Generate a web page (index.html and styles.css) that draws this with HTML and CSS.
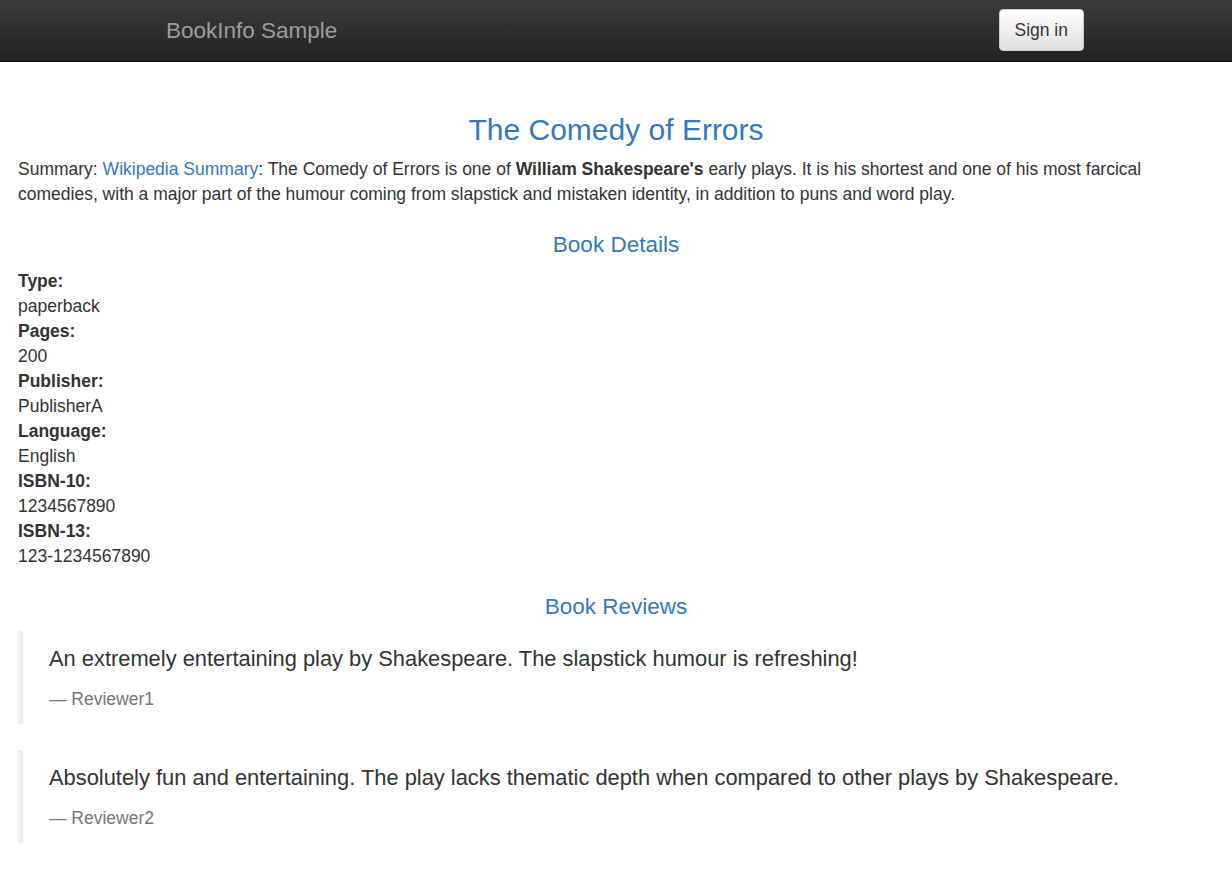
FILE: index.html
```html
<!DOCTYPE html>
<html>
<head>
<meta charset="utf-8">
<title>Simple Bookstore App</title>
<link rel="stylesheet" href="styles.css">
</head>
<body>
<nav class="navbar">
  <div class="navbar-inner">
    <a class="brand" href="#">BookInfo Sample</a>
    <button class="btn-signin" type="button">Sign in</button>
  </div>
</nav>
<main class="page">
  <h3 class="title">The Comedy of Errors</h3>
  <p class="summary">Summary: <a href="#">Wikipedia Summary</a>: The Comedy of Errors is one of <b>William Shakespeare's</b> early plays. It is his shortest and one of his most farcical comedies, with a major part of the humour coming from slapstick and mistaken identity, in addition to puns and word play.</p>
  <h4 class="section-title">Book Details</h4>
  <dl class="details">
    <dt>Type:</dt><dd>paperback</dd>
    <dt>Pages:</dt><dd>200</dd>
    <dt>Publisher:</dt><dd>PublisherA</dd>
    <dt>Language:</dt><dd>English</dd>
    <dt>ISBN-10:</dt><dd>1234567890</dd>
    <dt>ISBN-13:</dt><dd>123-1234567890</dd>
  </dl>
  <h4 class="section-title reviews-title">Book Reviews</h4>
  <blockquote class="review">
    <p>An extremely entertaining play by Shakespeare. The slapstick humour is refreshing!</p>
    <footer>— Reviewer1</footer>
  </blockquote>
  <blockquote class="review">
    <p>Absolutely fun and entertaining. The play lacks thematic depth when compared to other plays by Shakespeare.</p>
    <footer>— Reviewer2</footer>
  </blockquote>
</main>
</body>
</html>
```
FILE: styles.css
```css
html, body {
  margin: 0;
  padding: 0;
}
body {
  font-family: "Liberation Sans", Arial, Helvetica, sans-serif;
  font-size: 17.5px;
  line-height: 25px;
  color: #333;
  background: #fff;
}
a {
  color: #337ab7;
  text-decoration: none;
}

.navbar {
  height: 62px;
  box-sizing: border-box;
  border-bottom: 1px solid #080808;
  background: linear-gradient(to bottom, #3c3c3c 0%, #222 100%);
}
.navbar-inner {
  height: 61px;
  display: flex;
  align-items: center;
  justify-content: space-between;
  padding: 0 148px 0 166px;
}
.brand {
  color: #9d9d9d;
  font-size: 22.5px;
  line-height: 25px;
  padding-bottom: 1px;
}
.btn-signin {
  height: 42px;
  margin-top: -1px;
  padding: 0 15px 0 14px;
  font-family: inherit;
  font-size: 17.5px;
  line-height: 40px;
  color: #333;
  background: linear-gradient(to bottom, #fff 0%, #e0e0e0 100%);
  border: 1px solid #ccc;
  border-radius: 4px;
  box-shadow: inset 0 1px 0 rgba(255,255,255,.15), 0 1px 1px rgba(0,0,0,.075);
}

.page {
  padding: 0 18px;
}
.title {
  margin: 51px 0 11px;
  text-align: center;
  font-weight: 500;
  font-size: 30px;
  line-height: 33px;
  color: #337ab7;
}
.summary {
  margin: 0;
}
.section-title {
  margin: 25px 0 12px;
  text-align: center;
  font-weight: 500;
  font-size: 22.5px;
  line-height: 25px;
  color: #337ab7;
}
.details {
  margin: 0;
}
.details dt {
  font-weight: 700;
}
.details dd {
  margin: 0;
}
.review {
  margin: 0 0 26px;
  padding: 12px 25px 12px 26px;
  border-left: 5px solid #eee;
}
.review p {
  margin: 0 0 12.5px;
  font-size: 21.875px;
  line-height: 31.25px;
}
.review footer {
  font-size: 17.5px;
  line-height: 25px;
  color: #777;
}
```
